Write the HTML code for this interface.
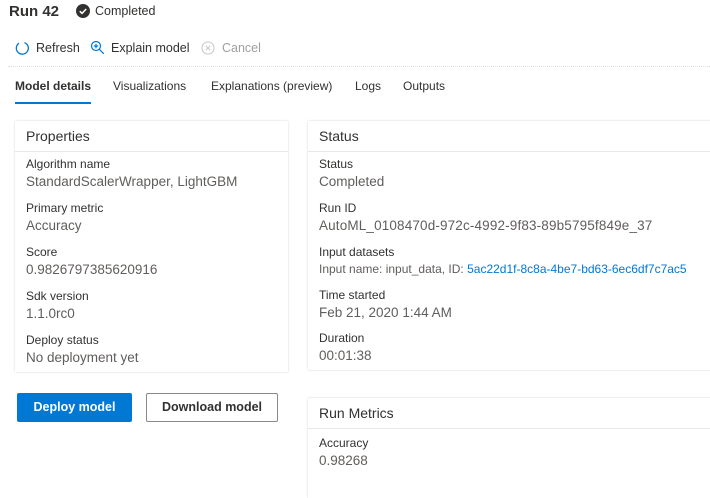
<!DOCTYPE html>
<html><head><meta charset="utf-8"><style>
body{margin:0;width:710px;height:478px;background:#fff;font-family:"Liberation Sans",sans-serif;position:relative;overflow:hidden;color:#323130}
.a{position:absolute;white-space:nowrap}
.lab{font-size:12px;color:#323130}
.val{font-size:13.5px;color:#605e5c}
.panel{position:absolute;background:#fff;box-shadow:0 0 2px rgba(0,0,0,.18)}
.ph{position:absolute;left:0;right:0;top:0;height:30px;border-bottom:1px solid #e8e8e8}
.pt{position:absolute;left:11px;top:7px;font-size:14px;color:#323130}
</style></head><body>
<div class="a" style="left:9px;top:3px;font-size:15px;font-weight:bold">Run 42</div>
<svg class="a" style="left:76px;top:4px" width="14" height="14"><circle cx="7" cy="7" r="7" fill="#323130"/><path d="M3.8 7.2l2.2 2.2 4.2-4.4" stroke="#fff" stroke-width="1.6" fill="none"/></svg>
<div class="a" style="left:95px;top:4px;font-size:12.5px">Completed</div>

<svg class="a" style="left:15px;top:41px" width="14" height="14"><path d="M4 2.2A6 6 0 1 0 9.5 1.6" stroke="#0078d4" stroke-width="1.3" fill="none"/></svg>
<div class="a" style="left:36px;top:41px;font-size:12.5px">Refresh</div>
<svg class="a" style="left:90px;top:40px" width="15" height="15"><circle cx="6" cy="6" r="4.5" stroke="#0078d4" stroke-width="1.2" fill="none"/><path d="M9.3 9.3l4.5 4.5M6 3.8v4.4M3.8 6h4.4" stroke="#0078d4" stroke-width="1.2"/></svg>
<div class="a" style="left:111px;top:41px;font-size:12.5px">Explain model</div>
<svg class="a" style="left:201px;top:41px" width="14" height="14"><circle cx="7" cy="7" r="6" stroke="#c8c6c4" fill="none"/><path d="M4.8 4.8l4.4 4.4M9.2 4.8l-4.4 4.4" stroke="#c8c6c4"/></svg>
<div class="a" style="left:222px;top:41px;font-size:12.5px;color:#a19f9d">Cancel</div>
<div class="a" style="left:8px;top:66px;width:702px;border-top:1px dotted #e1dfdd"></div>

<div class="a" style="left:15px;top:79px;font-size:12px;font-weight:bold">Model details</div>
<div class="a" style="left:15px;top:102px;width:76px;height:2px;background:#0078d4"></div>
<div class="a" style="left:113px;top:79px;font-size:12px">Visualizations</div>
<div class="a" style="left:211px;top:79px;font-size:12px">Explanations (preview)</div>
<div class="a" style="left:355px;top:79px;font-size:12px">Logs</div>
<div class="a" style="left:403px;top:79px;font-size:12px">Outputs</div>

<div class="panel" style="left:15px;top:121px;width:273px;height:251px">
<div class="ph"></div><div class="pt" style="top:7px;left:11px">Properties</div>
<div class="a lab" style="left:11px;top:36px">Algorithm name</div><div class="a val" style="left:11px;top:53px">StandardScalerWrapper, LightGBM</div>
<div class="a lab" style="left:11px;top:80px">Primary metric</div><div class="a val" style="left:11px;top:97px">Accuracy</div>
<div class="a lab" style="left:11px;top:124px">Score</div><div class="a val" style="left:11px;top:141px">0.9826797385620916</div>
<div class="a lab" style="left:11px;top:168px">Sdk version</div><div class="a val" style="left:11px;top:185px">1.1.0rc0</div>
<div class="a lab" style="left:11px;top:212px">Deploy status</div><div class="a val" style="left:11px;top:229px">No deployment yet</div>
</div>

<div class="panel" style="left:308px;top:121px;width:410px;height:249px">
<div class="ph"></div><div class="pt">Status</div>
<div class="a lab" style="left:11px;top:36px">Status</div><div class="a val" style="left:11px;top:53px">Completed</div>
<div class="a lab" style="left:11px;top:80px">Run ID</div><div class="a val" style="left:11px;top:97px;letter-spacing:0.15px">AutoML_0108470d-972c-4992-9f83-89b5795f849e_37</div>
<div class="a lab" style="left:11px;top:124px">Input datasets</div><div class="a" style="left:11px;top:141px;font-size:12px;color:#605e5c">Input name: input_data, ID: <span style="color:#0078d4">5ac22d1f-8c8a-4be7-bd63-6ec6df7c7ac5</span></div>
<div class="a lab" style="left:11px;top:167px">Time started</div><div class="a val" style="left:11px;top:184px">Feb 21, 2020 1:44 AM</div>
<div class="a lab" style="left:11px;top:210px">Duration</div><div class="a val" style="left:11px;top:227px">00:01:38</div>
</div>

<div class="a" style="left:17px;top:393px;width:115px;height:29px;background:#0078d4;border-radius:2px;color:#fff;font-size:12.5px;font-weight:bold;text-align:center;line-height:29px">Deploy model</div>
<div class="a" style="left:146px;top:393px;width:130px;height:27px;border:1px solid #8a8886;border-radius:2px;color:#323130;font-size:12.5px;font-weight:bold;text-align:center;line-height:27px">Download model</div>

<div class="panel" style="left:308px;top:398px;width:410px;height:100px">
<div class="ph" style="height:30px"></div><div class="pt" style="top:7px">Run Metrics</div>
<div class="a lab" style="left:11px;top:38px">Accuracy</div><div class="a val" style="left:11px;top:55px">0.98268</div>
</div>
</body></html>
